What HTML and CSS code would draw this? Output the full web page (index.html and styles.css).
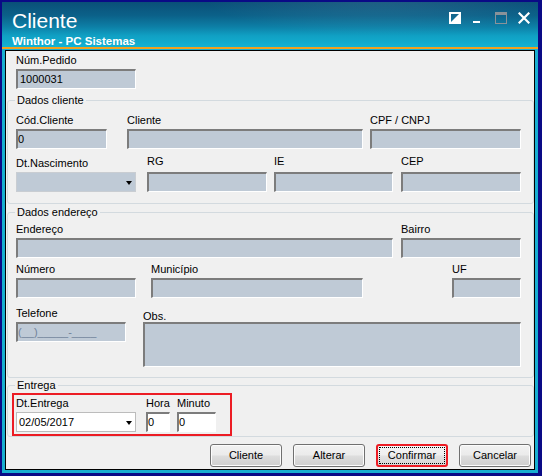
FILE: index.html
```html
<!DOCTYPE html>
<html lang="pt">
<head>
<meta charset="utf-8">
<title>Cliente</title>
<link rel="stylesheet" href="styles.css">
</head>
<body>
<div class="window">
  <div class="titlebar">
    <div class="titles">
      <div class="title">Cliente</div>
      <div class="subtitle">Winthor - PC Sistemas</div>
    </div>
    <div class="controls">
      <svg width="12" height="12" viewBox="0 0 12 12"><rect x="1" y="1" width="10" height="10" fill="none" stroke="#fff" stroke-width="2"/><polygon points="11,1 11,11 1,11" fill="#fff"/></svg>
      <svg width="12" height="12" viewBox="0 0 12 12"><rect x="1" y="9" width="7" height="2" fill="#fff"/></svg>
      <svg width="12" height="12" viewBox="0 0 12 12"><rect x="0.5" y="0.5" width="11" height="11" fill="none" stroke="#8a9299"/><rect x="0" y="0" width="12" height="3" fill="#8a9299"/></svg>
      <svg width="12" height="12" viewBox="0 0 12 12"><path d="M1.5 1.5 L10.5 10.5 M10.5 1.5 L1.5 10.5" stroke="#fff" stroke-width="2.2" stroke-linecap="square"/></svg>
    </div>
  </div>
  <div class="accent"></div>
  <div class="client">
    <div class="top-section">
      <div class="field w120">
        <label>Núm.Pedido</label>
        <div class="input pl">1000031</div>
      </div>
    </div>

    <fieldset class="group g1">
      <legend>Dados cliente</legend>
      <div class="row">
        <div class="field w91">
          <label>Cód.Cliente</label>
          <div class="input">0</div>
        </div>
        <div class="field w236 ml20">
          <label>Cliente</label>
          <div class="input"></div>
        </div>
        <div class="field w151 ml7">
          <label>CPF / CNPJ</label>
          <div class="input"></div>
        </div>
      </div>
      <div class="row mt7">
        <div class="field w120">
          <label>Dt.Nascimento</label>
          <div class="combo"><span class="combo-text"></span><span class="arrow"></span></div>
        </div>
        <div class="field w120 ml11">
          <label class="up">RG</label>
          <div class="input"></div>
        </div>
        <div class="field w119 ml7">
          <label class="up">IE</label>
          <div class="input"></div>
        </div>
        <div class="field w120 ml8">
          <label class="up">CEP</label>
          <div class="input"></div>
        </div>
      </div>
    </fieldset>

    <fieldset class="group g2">
      <legend>Dados endereço</legend>
      <div class="row">
        <div class="field w377">
          <label>Endereço</label>
          <div class="input"></div>
        </div>
        <div class="field w120 ml8">
          <label>Bairro</label>
          <div class="input"></div>
        </div>
      </div>
      <div class="row mt4">
        <div class="field w120">
          <label>Número</label>
          <div class="input"></div>
        </div>
        <div class="field w212 ml15">
          <label>Município</label>
          <div class="input"></div>
        </div>
        <div class="field w69 ml89">
          <label>UF</label>
          <div class="input"></div>
        </div>
      </div>
      <div class="row mt8">
        <div class="field w110">
          <label>Telefone</label>
          <div class="input mask">(__)_____-____</div>
        </div>
        <div class="field w378 ml17">
          <label class="down">Obs.</label>
          <div class="input memo"></div>
        </div>
      </div>
    </fieldset>

    <fieldset class="group g3">
      <legend>Entrega</legend>
      <div class="highlight">
        <div class="field w120">
          <label>Dt.Entrega</label>
          <div class="combo white"><span class="combo-text">02/05/2017</span><span class="arrow"></span></div>
        </div>
        <div class="field w24 ml10">
          <label>Hora</label>
          <div class="input white">0</div>
        </div>
        <div class="field w39 ml7">
          <label>Minuto</label>
          <div class="input white">0</div>
        </div>
      </div>
    </fieldset>

    <div class="buttons">
      <button class="btn">Cliente</button>
      <button class="btn">Alterar</button>
      <button class="btn focused"><span class="focus-ring">Confirmar</span></button>
      <button class="btn">Cancelar</button>
    </div>
  </div>
</div>
</body>
</html>
```

FILE: styles.css
```css
* { box-sizing: border-box; }
html, body { margin: 0; padding: 0; }
body {
  width: 542px;
  height: 476px;
  overflow: hidden;
  background: #0a0a86;
  padding: 2px 4px 3px 2px;
  font-family: "Liberation Sans", Arial, sans-serif;
  font-size: 11px;
  color: #000;
}
.window {
  height: 100%;
  background: #18aed0;
  display: flex;
  flex-direction: column;
}
.titlebar {
  height: 45px;
  flex: none;
  display: flex;
  background:
    radial-gradient(ellipse 260px 60px at 380px -8px, rgba(255,255,255,0.10), rgba(255,255,255,0) 70%),
    linear-gradient(180deg, #0a4f78 0%, #0b6189 30%, #0d7fa6 55%, #10a0c4 75%, #14b2d2 100%);
  color: #fff;
}
.titles { padding: 7px 0 0 10px; }
.title {
  font-size: 21px;
  line-height: 24px;
}
.subtitle {
  font-size: 11.5px;
  font-weight: bold;
  line-height: 14px;
  margin-top: 1px;
}
.controls {
  margin-left: auto;
  display: flex;
  gap: 11px;
  padding: 10px 8px 0 0;
  align-items: flex-start;
}
.controls svg { display: block; }
.accent {
  height: 2px;
  flex: none;
  background: #f2a11e;
}
.client {
  flex: 1;
  margin: 1px 3px 3px 3px;
  border: 1px solid #000;
  background: #f0f0f0;
}
.top-section { padding: 2px 0 0 10px; }

.field { display: flex; flex-direction: column; flex: none; }
.field label {
  display: block;
  line-height: 14px;
  height: 14px;
  margin-bottom: 2px;
  white-space: nowrap;
}
.field label.up { margin-top: -2px; margin-bottom: 4px; }
.field label.down { margin-top: 3px; margin-bottom: -1px; }

.input {
  height: 20px;
  background: #bfcad6;
  border-top: 2px solid #7c7c7c;
  border-left: 2px solid #7c7c7c;
  border-right: 1px solid #fff;
  border-bottom: 1px solid #fff;
  line-height: 17px;
  padding-left: 0;
  white-space: nowrap;
  overflow: hidden;
}
.input.pl { padding-left: 2px; }
.input.white { background: #fff; }
.input.memo { height: 45px; }
.input.mask { color: #72839a; padding-left: 0; }

.combo {
  height: 20px;
  background: #bfcad6;
  border: 1px solid #c9cdd2;
  display: flex;
  align-items: center;
  padding: 0 0 0 2px;
}
.combo.white { background: #fff; border-color: #bcbcbc; }
.combo-text { flex: 1; line-height: 18px; }
.arrow {
  width: 0;
  height: 0;
  border-left: 3.5px solid transparent;
  border-right: 3.5px solid transparent;
  border-top: 4px solid #000;
  margin: 1px 3px 0 0;
}

.row { display: flex; align-items: flex-start; }
.mt4 { margin-top: 4px; }
.mt7 { margin-top: 7px; }
.mt8 { margin-top: 8px; }

.w24 { width: 24px; }
.w39 { width: 39px; }
.w69 { width: 69px; }
.w91 { width: 91px; }
.w110 { width: 110px; }
.w119 { width: 119px; }
.w120 { width: 120px; }
.w151 { width: 151px; }
.w212 { width: 212px; }
.w236 { width: 236px; }
.w377 { width: 377px; }
.w378 { width: 378px; }
.ml7 { margin-left: 7px; }
.ml8 { margin-left: 8px; }
.ml10 { margin-left: 10px; }
.ml11 { margin-left: 11px; }
.ml15 { margin-left: 15px; }
.ml17 { margin-left: 17px; }
.ml20 { margin-left: 20px; }
.ml89 { margin-left: 89px; }

.group {
  margin: 0 0 0 1px;
  border: 1px solid #d3dadf;
  border-radius: 3px;
  padding: 0 8px 0 8px;
  min-width: 0;
}
.group legend {
  line-height: 14px;
  padding: 0 2px;
  margin-left: -1px;
}
.g1 { margin-top: 4px; padding-top: 6px; padding-bottom: 11px; }
.g2 { margin-top: 1px; padding-top: 3px; padding-bottom: 10px; }
.g3 { margin-top: 0; padding-top: 1px; padding-bottom: 0; }

.highlight {
  display: flex;
  align-items: flex-start;
  width: 220px;
  margin-left: -4px;
  border: 2px solid #ec1c24;
  padding: 1px 0 2px 2px;
}

.buttons {
  display: flex;
  justify-content: flex-end;
  gap: 11px;
  margin-top: 7px;
  padding-right: 3px;
}
.btn {
  width: 72px;
  height: 23px;
  padding: 0;
  font-family: "Liberation Sans", Arial, sans-serif;
  font-size: 11px;
  line-height: 21px;
  color: #000;
  border: 1px solid #707070;
  border-radius: 3px;
  background: linear-gradient(180deg, #f2f2f2 0%, #ebebeb 48%, #dddddd 52%, #cfcfcf 100%);
  box-shadow: inset 0 0 0 1px #fcfcfc;
  text-align: center;
}
.btn.focused {
  border: 2px solid #ec1c24;
  display: flex;
  padding: 1px;
  box-shadow: none;
  background: linear-gradient(180deg, #f4f4f4 0%, #efefef 48%, #e3e3e3 52%, #d6d6d6 100%);
}
.focus-ring {
  flex: 1;
  border: 1px dotted #000;
  line-height: 15px;
}
```
